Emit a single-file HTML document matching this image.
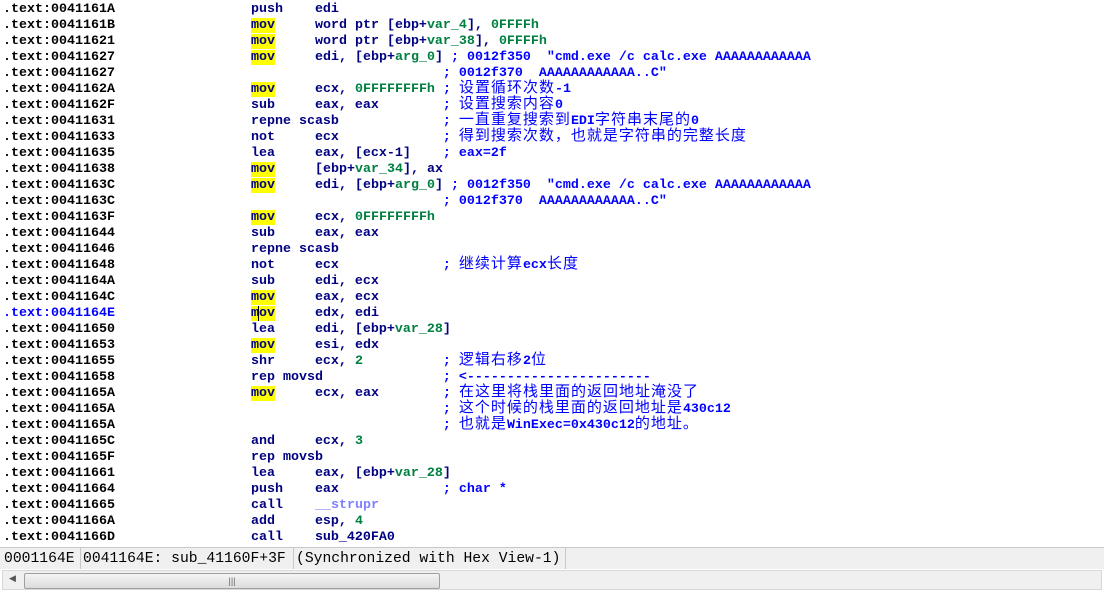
<!DOCTYPE html>
<html><head><meta charset="utf-8"><style>
body{margin:0;width:1104px;height:593px;background:#fff;overflow:hidden;position:relative;font-family:"Liberation Mono","Noto Sans CJK SC",monospace;}
.l{position:absolute;left:3px;height:16px;line-height:16px;font-size:13.33px;font-weight:bold;white-space:pre;color:#000080;overflow:visible}
.a{color:#000}
.g{color:#008040}
.c{color:#0000ff}
.p{color:#8080ff}
.h{background:#ffff00}
.z{font-family:"Noto Sans CJK SC",sans-serif;font-weight:normal;font-size:15px;letter-spacing:1px;line-height:10px;vertical-align:baseline}
#st{position:absolute;left:0;top:547px;width:1104px;height:21px;background:#f0f0f0;border-top:1px solid #c8c8c8;font-size:14.7px;line-height:22px;color:#000;white-space:pre;font-family:"Liberation Mono",monospace}
#st span{position:absolute;top:0}
#st i{position:absolute;top:0;width:1px;height:21px;background:#c8c8c8}
#sb{position:absolute;left:2px;top:570px;width:1100px;height:20px;background:#f0f0f0;border:1px solid #d8d8d8;box-sizing:border-box}
#th{position:absolute;left:21px;top:2px;width:414px;height:14px;border:1px solid #a0a0a0;border-radius:2px;background:linear-gradient(#f4f4f4,#dcdcdc);text-align:center;font-size:9px;line-height:14px;color:#666;font-family:"Liberation Sans",sans-serif}
</style></head><body>
<div class="l" style="top:2px"><span class="a">.text:0041161A</span>                 push    edi</div>
<div class="l" style="top:18px"><span class="a">.text:0041161B</span>                 <span class="h">mov</span>     word ptr [ebp+<span class="g">var_4</span>], <span class="g">0FFFFh</span></div>
<div class="l" style="top:34px"><span class="a">.text:00411621</span>                 <span class="h">mov</span>     word ptr [ebp+<span class="g">var_38</span>], <span class="g">0FFFFh</span></div>
<div class="l" style="top:50px"><span class="a">.text:00411627</span>                 <span class="h">mov</span>     edi, [ebp+<span class="g">arg_0</span>] <span class="c">; 0012f350  "cmd.exe /c calc.exe AAAAAAAAAAAA</span></div>
<div class="l" style="top:66px"><span class="a">.text:00411627</span>                                         <span class="c">; 0012f370  AAAAAAAAAAAA..C"</span></div>
<div class="l" style="top:82px"><span class="a">.text:0041162A</span>                 <span class="h">mov</span>     ecx, <span class="g">0FFFFFFFFh</span> <span class="c">; <span class="z">设置循环次数</span>-1</span></div>
<div class="l" style="top:98px"><span class="a">.text:0041162F</span>                 sub     eax, eax        <span class="c">; <span class="z">设置搜索内容</span>0</span></div>
<div class="l" style="top:114px"><span class="a">.text:00411631</span>                 repne scasb             <span class="c">; <span class="z">一直重复搜索到</span>EDI<span class="z">字符串末尾的</span>0</span></div>
<div class="l" style="top:130px"><span class="a">.text:00411633</span>                 not     ecx             <span class="c">; <span class="z">得到搜索次数，也就是字符串的完整长度</span></span></div>
<div class="l" style="top:146px"><span class="a">.text:00411635</span>                 lea     eax, [ecx-1]    <span class="c">; eax=2f</span></div>
<div class="l" style="top:162px"><span class="a">.text:00411638</span>                 <span class="h">mov</span>     [ebp+<span class="g">var_34</span>], ax</div>
<div class="l" style="top:178px"><span class="a">.text:0041163C</span>                 <span class="h">mov</span>     edi, [ebp+<span class="g">arg_0</span>] <span class="c">; 0012f350  "cmd.exe /c calc.exe AAAAAAAAAAAA</span></div>
<div class="l" style="top:194px"><span class="a">.text:0041163C</span>                                         <span class="c">; 0012f370  AAAAAAAAAAAA..C"</span></div>
<div class="l" style="top:210px"><span class="a">.text:0041163F</span>                 <span class="h">mov</span>     ecx, <span class="g">0FFFFFFFFh</span></div>
<div class="l" style="top:226px"><span class="a">.text:00411644</span>                 sub     eax, eax</div>
<div class="l" style="top:242px"><span class="a">.text:00411646</span>                 repne scasb</div>
<div class="l" style="top:258px"><span class="a">.text:00411648</span>                 not     ecx             <span class="c">; <span class="z">继续计算</span>ecx<span class="z">长度</span></span></div>
<div class="l" style="top:274px"><span class="a">.text:0041164A</span>                 sub     edi, ecx</div>
<div class="l" style="top:290px"><span class="a">.text:0041164C</span>                 <span class="h">mov</span>     eax, ecx</div>
<div class="l" style="top:306px"><span class="c">.text:0041164E</span>                 <span class="h">m<span style="margin-left:-1px;border-left:1px solid #000">o</span>v</span>     edx, edi</div>
<div class="l" style="top:322px"><span class="a">.text:00411650</span>                 lea     edi, [ebp+<span class="g">var_28</span>]</div>
<div class="l" style="top:338px"><span class="a">.text:00411653</span>                 <span class="h">mov</span>     esi, edx</div>
<div class="l" style="top:354px"><span class="a">.text:00411655</span>                 shr     ecx, <span class="g">2</span>          <span class="c">; <span class="z">逻辑右移</span>2<span class="z">位</span></span></div>
<div class="l" style="top:370px"><span class="a">.text:00411658</span>                 rep movsd               <span class="c">; &lt;-----------------------</span></div>
<div class="l" style="top:386px"><span class="a">.text:0041165A</span>                 <span class="h">mov</span>     ecx, eax        <span class="c">; <span class="z">在这里将栈里面的返回地址淹没了</span></span></div>
<div class="l" style="top:402px"><span class="a">.text:0041165A</span>                                         <span class="c">; <span class="z">这个时候的栈里面的返回地址是</span>430c12</span></div>
<div class="l" style="top:418px"><span class="a">.text:0041165A</span>                                         <span class="c">; <span class="z">也就是</span>WinExec=0x430c12<span class="z">的地址。</span></span></div>
<div class="l" style="top:434px"><span class="a">.text:0041165C</span>                 and     ecx, <span class="g">3</span></div>
<div class="l" style="top:450px"><span class="a">.text:0041165F</span>                 rep movsb</div>
<div class="l" style="top:466px"><span class="a">.text:00411661</span>                 lea     eax, [ebp+<span class="g">var_28</span>]</div>
<div class="l" style="top:482px"><span class="a">.text:00411664</span>                 push    eax             <span class="c">; char *</span></div>
<div class="l" style="top:498px"><span class="a">.text:00411665</span>                 call    <span class="p">__strupr</span></div>
<div class="l" style="top:514px"><span class="a">.text:0041166A</span>                 add     esp, <span class="g">4</span></div>
<div class="l" style="top:530px"><span class="a">.text:0041166D</span>                 call    sub_420FA0</div>
<div id="st"><span style="left:4px">0001164E</span><i style="left:80px"></i><span style="left:83px">0041164E: sub_41160F+3F</span><i style="left:293px"></i><span style="left:296px">(Synchronized with Hex View-1)</span><i style="left:565px"></i></div>
<div id="sb"><div style="position:absolute;left:6px;top:3px;font-size:9px;color:#555;font-family:'DejaVu Sans',sans-serif">◀</div><div id="th">|||</div></div>
</body></html>
